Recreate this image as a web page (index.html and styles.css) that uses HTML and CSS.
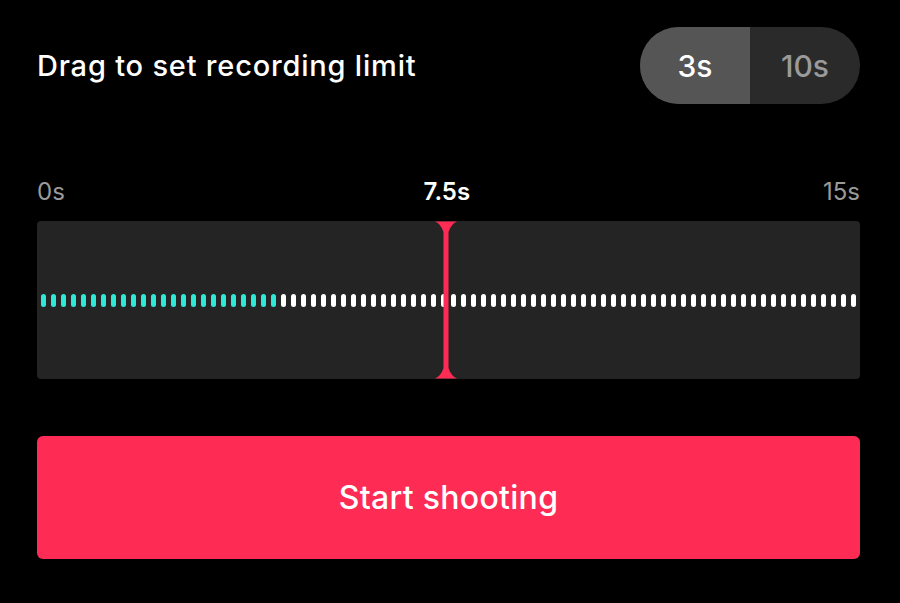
FILE: index.html
```html
<!DOCTYPE html>
<html lang="en">

<head>
  <meta charset="UTF-8">
  <title>Recording Limit</title>
  <link rel="stylesheet" href="styles.css">
</head>

<body>

  <div class="panel">
    <div class="header">
      <h1 class="title">Drag to set recording limit</h1>
      <div class="toggle">
        <span class="toggle-item active">3s</span>
        <span class="toggle-item">10s</span>
      </div>
    </div>

    <div class="scale">
      <span class="scale-min">0s</span>
      <span class="scale-mid">7.5s</span>
      <span class="scale-max">15s</span>
    </div>

    <div class="track">
      <div class="ticks" id="ticks"></div>
      <svg class="handle" width="24" height="158" viewBox="0 0 24 158">
        <path d="M1 0.5 H23 Q17 3 14.5 11 V147 Q17 155 23 157.5 H1 Q7 155 9.5 147 V11 Q7 3 1 0.5 Z" fill="#fe2c55" />
      </svg>
    </div>

    <button class="shoot">Start shooting</button>
  </div>

  <script>
    // build the tick row: first part is the recorded range
    const ticks = document.getElementById('ticks');
    for (let i = 0; i < 82; i++) {
      const t = document.createElement('span');
      t.className = i < 24 ? 'tick done' : 'tick';
      ticks.appendChild(t);
    }
  </script>

</body>

</html>
```

FILE: styles.css
```css
body {
  margin: 0;
  background-color: #000;
  font-family: Inter, "Open Sans", sans-serif;
  color: #fff;
}

.panel {
  padding: 27px 40px 0 37px;
}

.header {
  display: flex;
  justify-content: space-between;
  align-items: center;
}

.title {
  margin: 0;
  font-size: 29px;
  font-weight: 500;
  letter-spacing: 0.8px;
}

.toggle {
  display: flex;
  height: 77px;
  border-radius: 39px;
  overflow: hidden;
  background-color: #2a2a2a;
}

.toggle-item {
  width: 110px;
  display: flex;
  align-items: center;
  justify-content: center;
  font-size: 30px;
  font-weight: 500;
  color: #9a9a9a;
}

.toggle-item.active {
  background-color: #555;
  color: #fff;
}

.scale {
  display: flex;
  justify-content: space-between;
  margin-top: 72px;
  font-size: 24px;
  color: #9a9a9a;
  line-height: 32px;
}

.scale-mid {
  color: #fff;
  font-weight: 600;
  margin-left: 6px;
}

.track {
  position: relative;
  margin-top: 13px;
  height: 158px;
  background-color: #242424;
  border-radius: 4px;
  display: flex;
  align-items: center;
}

.ticks {
  display: flex;
  gap: 5px;
  padding-left: 4px;
}

.tick {
  width: 5px;
  height: 13px;
  border-radius: 2.5px;
  background-color: #fff;
}

.tick.done {
  background-color: #2ee8d8;
}

.handle {
  position: absolute;
  left: 397px;
  top: 0;
}

.shoot {
  display: block;
  width: 100%;
  height: 123px;
  margin-top: 57px;
  border: none;
  border-radius: 6px;
  background-color: #fe2c55;
  color: #fff;
  font-family: inherit;
  font-size: 32px;
  font-weight: 500;
  letter-spacing: 0.3px;
}
```
